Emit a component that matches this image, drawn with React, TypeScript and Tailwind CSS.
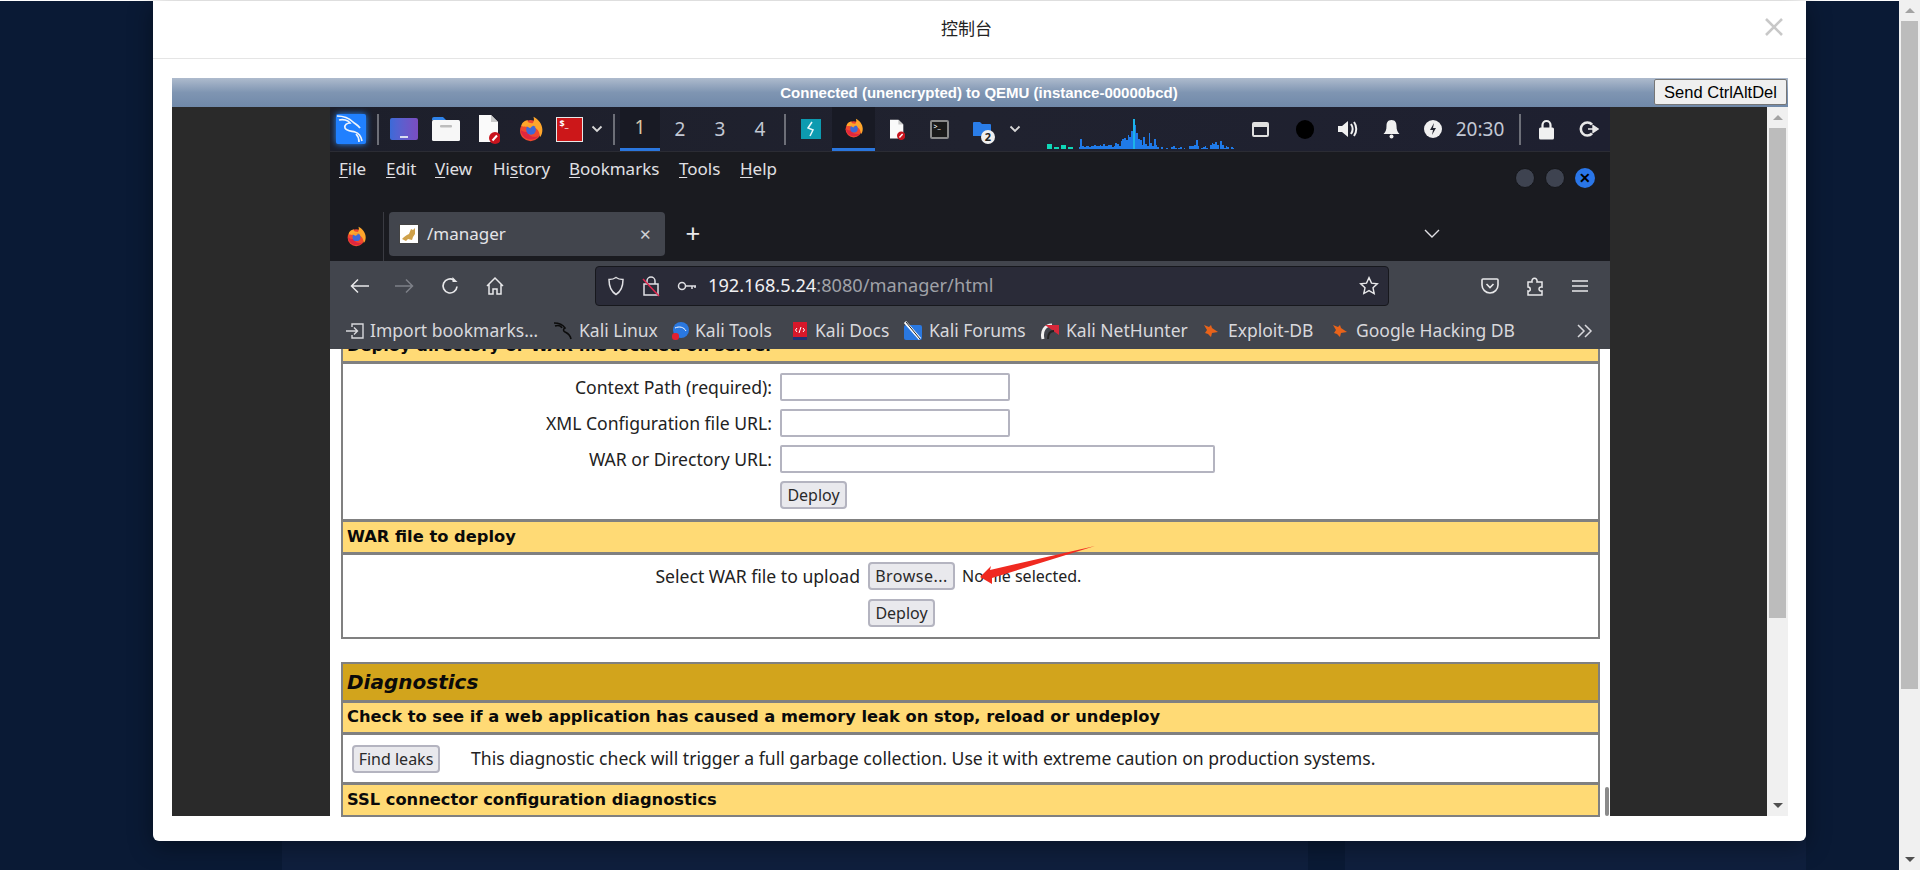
import { ReactNode } from "react";

const graph = [
  5, 5, 5, 0, 2, 2, 2, 0, 4, 4, 4, 0, 2, 2, 2, 0, 0, 0,
  2, 10, 3, 2, 3, 3, 2, 3, 3, 4, 3, 3, 4, 3, 5, 3, 3, 4, 4, 2, 3, 6, 5, 3, 8, 10, 11, 9, 14, 12, 18,
  30, 24, 16, 10, 9, 4, 12, 5, 3, 16, 6, 3, 10, 4, 2, 0, 2, 0, 0, 1, 0, 0, 2, 3, 1, 0, 1, 2, 0, 1, 0, 0,
  3, 3, 3, 4, 9, 3, 0, 1, 2, 3, 1, 0, 4, 6, 5, 7, 4, 0, 8, 4, 1, 3, 2, 0, 2, 1,
];

function Firefox({ size = 26 }: { size?: number }) {
  return (
    <svg width={size} height={size} viewBox="0 0 32 32">
      <circle cx="15.5" cy="18" r="13" fill="#f0492f" />
      <path d="M4 12C6 6 10 6 12 5c-1 3 2 4 6 4 2-2 2-5 1-8 6 3 11 9 11 16 0 4-1 7-3 9 0-6-3-12-9-12-6-1-12 0-14-2z" fill="#ffa62b" />
      <path d="M3 17c1 7 6 12 13 12 4 0 7-1 9-4-5 2-12 0-13-5-4 0-7-1-9-3z" fill="#e0263f" />
      <circle cx="16" cy="17" r="6" fill="#3f68d8" />
      <path d="M10 12c3-2 7-2 10 0-3 0-4 2-5 3-2-1-4-2-5-3z" fill="#ff9f2a" />
    </svg>
  );
}

function DocIcon({ w = 22, h = 30 }: { w?: number; h?: number }) {
  return (
    <svg width={w} height={h} viewBox="0 0 22 30">
      <path d="M1 1h12l7 7v20H1z" fill="#fafafa" />
      <path d="M13 1l7 7h-7z" fill="#c9c9c9" />
      <circle cx="17" cy="24" r="6" fill="#c8141e" />
      <path d="M14.5 26.5l4.5-5" stroke="#fff" strokeWidth="2" />
    </svg>
  );
}

function Folder() {
  return (
    <svg width="30" height="26" viewBox="0 0 30 26">
      <path d="M1 3a2 2 0 0 1 2-2h9l3 3h-14z" fill="#2f83ea" />
      <rect x="1" y="4" width="28" height="21" rx="1.5" fill="#f7f7f7" />
      <rect x="9" y="9" width="12" height="2.5" rx="1" fill="#bdbdbd" />
    </svg>
  );
}

function Chevron({ color = "#d8d8d8" }: { color?: string }) {
  return (
    <svg width="12" height="8" viewBox="0 0 12 8" fill="none" stroke={color} strokeWidth="1.8">
      <path d="M1.5 1.5 6 6l4.5-4.5" />
    </svg>
  );
}

function Slot({ className, children }: { className: string; children?: ReactNode }) {
  return <div className={`flex h-full items-center justify-center ${className}`}>{children}</div>;
}

function Sep() {
  return <div className="h-[31px] w-[2px] bg-[#6d6f78]" />;
}

function TaskBar() {
  return (
    <div className="flex h-[45px] border-b border-[#2b2c34] bg-gradient-to-r from-[#1d1f2b] via-[#20222f] to-[#1e2030] font-['Noto_Sans'] text-[#c3c8d4]">
      <Slot className="w-[42px]">
        <div className="flex h-[30px] w-[30px] items-center justify-center rounded-[2px] bg-[#2080ff] shadow-[0_0_6px_#2b8cff]">
          <svg width="30" height="30" viewBox="0 0 30 30" fill="none" stroke="#eef4fc" strokeWidth="1.7">
            <path d="M1 2c6 0 12 2 16 6 2 2 5 3 7 6M3 6c4-1 9 0 11 3-3 0-6 2-5 5 1 3 6 3 10 4 4 1 6 4 7 9" />
            <path d="M20 20c2 2 3 5 3 8" />
          </svg>
        </div>
      </Slot>
      <Slot className="w-[12px]"><Sep /></Slot>
      <Slot className="w-[40px]">
        <div className="flex h-[22px] w-[28px] items-end justify-center rounded-[2px] bg-gradient-to-r from-[#3a6ad8] to-[#7a4cc0] pb-[2px]">
          <div className="h-[2px] w-[8px] bg-[#d8dcf0]" />
        </div>
      </Slot>
      <Slot className="w-[44px]"><Folder /></Slot>
      <Slot className="w-[42px]"><DocIcon /></Slot>
      <Slot className="w-[42px]"><Firefox /></Slot>
      <Slot className="w-[34px]">
        <div className="h-[25px] w-[27px] border border-[#e8e8e8] bg-[#cc1719] pl-[3px] text-[9px] font-bold leading-[12px] text-white">$_</div>
      </Slot>
      <Slot className="w-[22px]"><Chevron /></Slot>
      <Slot className="w-[12px]"><Sep /></Slot>
      <Slot className="w-[40px] border-b-[3px] border-[#2a76dd] bg-[#181a24] text-[19px] text-[#d8c8a8]">1</Slot>
      <Slot className="w-[40px] text-[19px]">2</Slot>
      <Slot className="w-[40px] text-[19px]">3</Slot>
      <Slot className="w-[40px] text-[19px]">4</Slot>
      <Slot className="w-[10px]"><Sep /></Slot>
      <Slot className="w-[42px]">
        <div className="flex h-[20px] w-[20px] items-center justify-center bg-[#0d9bb0]">
          <svg width="10" height="16" viewBox="0 0 10 16" fill="none" stroke="#e8f8fa" strokeWidth="1.5">
            <path d="M6 1 2 7l5 2-3 6" />
          </svg>
        </div>
      </Slot>
      <Slot className="w-[43px] border-b-[3px] border-[#2a76dd] bg-[#181a24]"><Firefox size={20} /></Slot>
      <Slot className="w-[43px]"><DocIcon w={16} h={21} /></Slot>
      <Slot className="w-[42px]">
        <div className="h-[19px] w-[19px] rounded-[2px] border-2 border-[#8a8a8a] bg-[#1a1a1a] pl-[2px] text-[7px] leading-[9px] text-white">{">_"}</div>
      </Slot>
      <Slot className="relative w-[43px]">
        <svg width="20" height="16" viewBox="0 0 20 16">
          <path d="M1 2a1 1 0 0 1 1-1h6l2 2h8a1 1 0 0 1 1 1v11H1z" fill="#2a7de8" />
        </svg>
        <div className="absolute left-[21px] top-[23px] flex h-[14px] w-[14px] items-center justify-center rounded-full bg-[#efefef] text-[11px] font-bold text-[#222]">2</div>
      </Slot>
      <Slot className="w-[24px]"><Chevron /></Slot>
      <div className="w-[20px]" />
      <div className="flex h-[42px] w-[191px] items-end">
        {graph.map((h, i) => (
          <div
            key={i}
            className="w-[1.76px]"
            style={{ height: h, background: i < 18 ? "#0fd8b8" : i === 49 ? "#1cb4e8" : "#1f7ae8" }}
          />
        ))}
      </div>
      <Slot className="w-[44px]">
        <div className="h-[15px] w-[17px] rounded-[2px] border-2 border-[#e0e0e0] border-t-[5px]" />
      </Slot>
      <Slot className="w-[46px]">
        <div className="h-[19px] w-[18px] rounded-full bg-black" />
      </Slot>
      <Slot className="w-[40px]">
        <svg width="22" height="20" viewBox="0 0 22 20" fill="none">
          <path d="M1 7h4l6-5v16l-6-5H1z" fill="#f0f0f0" />
          <path d="M14 5c2 3 2 7 0 10M17 3c3 4 3 10 0 14" stroke="#f0f0f0" strokeWidth="2" />
        </svg>
      </Slot>
      <Slot className="w-[46px]">
        <svg width="17" height="20" viewBox="0 0 17 20">
          <path d="M8.5 1c4 0 5 3 5 6 0 4 1 6 3 8H.5c2-2 3-4 3-8 0-3 1-6 5-6z" fill="#f0f0f0" />
          <circle cx="8.5" cy="17.5" r="2" fill="#f0f0f0" />
        </svg>
      </Slot>
      <Slot className="w-[38px]">
        <svg width="18" height="18" viewBox="0 0 18 18">
          <circle cx="9" cy="9" r="9" fill="#f0f0f0" />
          <path d="M10 3 6 10h3l-1 5 4-7H9z" fill="#22242f" />
        </svg>
      </Slot>
      <Slot className="w-[56px] text-[19px]">20:30</Slot>
      <Slot className="w-[24px]"><Sep /></Slot>
      <Slot className="w-[28px]">
        <svg width="17" height="21" viewBox="0 0 17 21">
          <path d="M4.500 9V6a4 4 0 0 1 8 0v3" fill="none" stroke="#f0f0f0" strokeWidth="2.2" />
          <rect x="1" y="8.500" width="15" height="12" rx="1.500" fill="#f0f0f0" />
        </svg>
      </Slot>
      <Slot className="ml-[10px] w-[38px]">
        <svg width="20" height="18" viewBox="0 0 20 18" fill="none">
          <path d="M13 4.500A6.500 6.500 0 1 0 13 13.500" stroke="#e8e8e8" strokeWidth="2.6" />
          <path d="M9 9h6M14 5.500 19 9l-5 3.500z" stroke="#e8e8e8" fill="#e8e8e8" strokeWidth="1.4" />
        </svg>
      </Slot>
    </div>
  );
}

function MenuItem({ className, pre, ul, post }: { className: string; pre?: string; ul: string; post: string }) {
  return (
    <div className={className}>
      {pre}
      <span className="underline underline-offset-2">{ul}</span>
      {post}
    </div>
  );
}

function MenuBar() {
  return (
    <div className="flex h-[60px] bg-[#1a1b20] pl-[9px] pt-[5px] font-['Noto_Sans'] text-[17px] leading-[24px] text-[#e0e0e4]">
      <MenuItem className="w-[47px]" ul="F" post="ile" />
      <MenuItem className="w-[49px]" ul="E" post="dit" />
      <MenuItem className="w-[58px]" ul="V" post="iew" />
      <MenuItem className="w-[76px]" pre="Hi" ul="s" post="tory" />
      <MenuItem className="w-[110px]" ul="B" post="ookmarks" />
      <MenuItem className="w-[61px]" ul="T" post="ools" />
      <MenuItem className="w-[60px]" ul="H" post="elp" />
      <div className="ml-auto mr-[15px] mt-[11px] flex h-[20px] gap-[10px]">
        <div className="h-[20px] w-[20px] rounded-full border border-[#15161a] bg-[#3e4350]" />
        <div className="h-[20px] w-[20px] rounded-full border border-[#15161a] bg-[#3e4350]" />
        <div className="flex h-[20px] w-[20px] items-center justify-center rounded-full bg-[#2a76e8] text-[14px] font-bold leading-none text-black">✕</div>
      </div>
    </div>
  );
}

function TabBar() {
  return (
    <div className="flex h-[49px] bg-[#1a1b20] font-['Noto_Sans']">
      <Slot className="h-[45px] w-[53px]"><Firefox size={21} /></Slot>
      <div className="h-[49px] w-[1px] bg-[#3a3b42]" />
      <div className="ml-[5px] flex h-[44px] w-[276px] items-center rounded-[4px] bg-[#42454d] pl-[10px] text-[17px] text-[#e4e4e8]">
        <svg width="20" height="20" viewBox="0 0 20 20">
          <rect x="0.5" y="0.5" width="19" height="19" fill="#fff" stroke="#444" />
          <path d="M3 15c2-2 4-4 7-5l2-5 2 1 2-2 0 6-2 3-1 3-4-1-2 2z" fill="#cfa14a" />
        </svg>
        <span className="ml-[8px] flex-1">/manager</span>
        <span className="mr-[13px] text-[15px] text-[#d0d0d4]">✕</span>
      </div>
      <div className="ml-[18px] mt-[6px] h-[32px] w-[20px] text-center text-[26px] leading-[30px] text-[#e8e8ea]">+</div>
      <div className="ml-[721px] mt-[17px] h-[20px]">
        <svg width="16" height="10" viewBox="0 0 16 10" fill="none" stroke="#e0e0e4" strokeWidth="1.4">
          <path d="M1 1l7 7 7-7" />
        </svg>
      </div>
    </div>
  );
}

function Toolbar() {
  return (
    <div className="flex h-[50px] items-center bg-[#42454d] font-['Noto_Sans'] text-[#e8e8ea]">
      <Slot className="w-[60px]">
        <svg width="20" height="16" viewBox="0 0 20 16" fill="none" stroke="#e8e8ea" strokeWidth="1.5"><path d="M19 8H2M8 1.500 1.500 8 8 14.500" /></svg>
      </Slot>
      <Slot className="w-[28px]">
        <svg width="20" height="16" viewBox="0 0 20 16" fill="none" stroke="#7d8088" strokeWidth="1.5"><path d="M1 8h17M12 1.500 18.500 8 12 14.500" /></svg>
      </Slot>
      <Slot className="w-[64px]">
        <svg width="20" height="20" viewBox="0 0 20 20" fill="none" stroke="#e8e8ea" strokeWidth="1.7"><path d="M17 10.500A7 7 0 1 1 14 4.200" /><path d="M12.500 1v5h5z" fill="#e8e8ea" stroke="none" /></svg>
      </Slot>
      <Slot className="w-[26px]">
        <svg width="20" height="20" viewBox="0 0 20 20" fill="none" stroke="#e8e8ea" strokeWidth="1.5"><path d="M2 10l8-8 8 8M4 8v10h4v-5h4v5h4V8" /></svg>
      </Slot>
      <div className="ml-[87px] flex h-[40px] w-[794px] items-center rounded-[4px] border border-[#17181d] bg-[#2a2b38] pl-[11px]">
        <svg width="18" height="20" viewBox="0 0 18 20" fill="none" stroke="#e0e0e4" strokeWidth="1.5"><path d="M9 1.500c2 1.500 5 2 7 2 0 7-2 12-7 15-5-3-7-8-7-15 2 0 5-.5 7-2z" /></svg>
        <svg className="ml-[17px]" width="18" height="22" viewBox="0 0 18 22" fill="none" strokeWidth="1.5">
          <path d="M5 9V6a4 4 0 0 1 8 0v3M2 9h14v11H2z" stroke="#e0e0e4" />
          <path d="M1 4l16 17" stroke="#e22850" />
        </svg>
        <svg className="ml-[17px]" width="20" height="12" viewBox="0 0 20 12" fill="none" stroke="#e0e0e4" strokeWidth="1.5"><circle cx="5" cy="6" r="3.500" /><path d="M9 6h10M15 6v3M18 6v2" /></svg>
        <div className="ml-[11px] flex-1 text-[18.2px] text-[#f0f0f2]">
          192.168.5.24<span className="text-[#a0a2a8]">:8080/manager/html</span>
        </div>
        <svg className="mr-[9px]" width="20" height="20" viewBox="0 0 24 24" fill="none" stroke="#e8e8ea" strokeWidth="1.7"><path d="m12 2 3 6.500 7 .8-5.200 4.800 1.400 7L12 17.600 5.800 21l1.400-7L2 9.300l7-.8z" /></svg>
      </div>
      <Slot className="ml-[81px] w-[40px]">
        <svg width="18" height="18" viewBox="0 0 18 18" fill="none" stroke="#e8e8ea" strokeWidth="1.6"><path d="M2 2h14a1 1 0 0 1 1 1v5a8 8 0 0 1-16 0V3a1 1 0 0 1 1-1z" /><path d="M5.500 7 9 10.500 12.500 7" /></svg>
      </Slot>
      <Slot className="ml-[5px] w-[40px]">
        <svg width="18" height="20" viewBox="0 0 18 20" fill="none" stroke="#e8e8ea" strokeWidth="1.5"><path d="M2 6h4c-1-5 6-5 5 0h5v5c-4-1-4 5 0 4v4H2v-4c3 1 3-4 0-4z" /></svg>
      </Slot>
      <Slot className="ml-[2px] w-[46px]">
        <svg width="16" height="14" viewBox="0 0 16 14" fill="none" stroke="#e8e8ea" strokeWidth="1.6"><path d="M0 2h16M0 7h16M0 12h16" /></svg>
      </Slot>
    </div>
  );
}

function Flame() {
  return (
    <svg width="16" height="14" viewBox="0 0 16 14">
      <path d="M1 1l5 2 2-2 1 3 6 4-6 1-1 4-3-3-3-1 2-3z" fill="#e8631a" />
    </svg>
  );
}

function BookmarksBar() {
  return (
    <div className="relative z-10 flex h-[38px] items-center whitespace-nowrap bg-[#42454d] pl-[16px] pt-[1px] font-['Noto_Sans'] text-[17.5px] text-[#d8d8dc]">
      <svg width="18" height="16" viewBox="0 0 18 16" fill="none" stroke="#d8d8dc" strokeWidth="1.4"><path d="M6 4V1h11v14H6v-3M0 8h11M8 4.500 11.500 8 8 11.500" /></svg>
      <div className="ml-[6px] w-[183px]">Import bookmarks…</div>
      <svg width="20" height="20" viewBox="0 0 20 20" fill="none" stroke="#0c0c0c" strokeWidth="1.6"><path d="M1 2c5 0 9 2 11 5-2 1-2 3 0 4s5 2 6 7M2 5c3-1 6 0 7 2" /></svg>
      <div className="ml-[6px] w-[92px]">Kali Linux</div>
      <svg width="18" height="20" viewBox="0 0 18 20"><circle cx="10" cy="9" r="8" fill="#2a78e0" /><path d="M4 7c4-2 9-1 11 3" stroke="#fff" fill="none" /><rect x="1" y="12" width="7" height="7" rx="3" fill="#e22030" /></svg>
      <div className="ml-[6px] w-[97px]">Kali Tools</div>
      <svg width="16" height="20" viewBox="0 0 16 20"><rect x="1" y="1" width="14" height="18" fill="#d8182a" /><path d="M1 16h14v3H1z" fill="#203070" /><path d="M5 7 3.500 9 5 11M11 7l1.500 2L11 11M9 6 7 12" stroke="#fff" fill="none" /></svg>
      <div className="ml-[7px] w-[88px]">Kali Docs</div>
      <svg width="20" height="20" viewBox="0 0 20 20"><rect x="1" y="4" width="18" height="15" rx="2" fill="#2a78e0" /><path d="M2 1l15 17" stroke="#fff" strokeWidth="3" /><path d="M3 1l14 17" stroke="#222" /></svg>
      <div className="ml-[6px] w-[111px]">Kali Forums</div>
      <svg width="20" height="20" viewBox="0 0 20 20" fill="none"><path d="M3 18c-2-8 2-14 9-14" stroke="#f0f0f0" strokeWidth="3" /><path d="M5 4h14v10z" fill="#d8283a" /><path d="M8 18c0-5 2-8 6-8" stroke="#222" strokeWidth="2" /></svg>
      <div className="ml-[6px] w-[137px]">Kali NetHunter</div>
      <Flame />
      <div className="ml-[9px] w-[104px]">Exploit-DB</div>
      <Flame />
      <div className="ml-[8px] w-[220px]">Google Hacking DB</div>
      <svg width="18" height="14" viewBox="0 0 18 14" fill="none" stroke="#d8d8dc" strokeWidth="1.5"><path d="M2 1l6 6-6 6M9 1l6 6-6 6" /></svg>
    </div>
  );
}

function Btn({ className, children }: { className: string; children: ReactNode }) {
  return (
    <div className={`flex h-[28px] items-center justify-center rounded-[4px] border-2 border-[#b4b4c0] bg-[#e9e9ed] text-[16px] text-[#2a2a2a] ${className}`}>
      {children}
    </div>
  );
}

function Input({ className }: { className: string }) {
  return <div className={`h-[28px] rounded-[2px] border-2 border-[#b4b4c0] bg-white ${className}`} />;
}

function YellowRow({ className, children }: { className: string; children: ReactNode }) {
  return (
    <div className={`flex items-center border-b-[3px] border-[#808080] bg-[#ffda75] pl-[4px] font-['DejaVu_Sans'] text-[16.3px] font-bold text-[#0a0a0a] ${className}`}>
      {children}
    </div>
  );
}

function FormRow({ label, children }: { label: string; children: ReactNode }) {
  return (
    <div className="flex items-center">
      <div className="w-[435px] pr-[6px] text-right">{label}</div>
      <div className="ml-[2px]">{children}</div>
    </div>
  );
}

function ManagerPage() {
  return (
    <div className="h-[468px] overflow-hidden bg-white pl-[11px] font-['Noto_Sans'] text-[17.6px] text-[#222]">
      <div className="relative -mt-[18px] w-[1259px]">
        <div className="border-2 border-[#808080] border-t-0">
          <YellowRow className="h-[33px]">Deploy directory or WAR file located on server</YellowRow>
          <div className="flex h-[158px] flex-col gap-[8px] border-b-[3px] border-[#808080] pt-[9px]">
            <FormRow label="Context Path (required):"><Input className="w-[230px]" /></FormRow>
            <FormRow label="XML Configuration file URL:"><Input className="w-[230px]" /></FormRow>
            <FormRow label="WAR or Directory URL:"><Input className="w-[435px]" /></FormRow>
            <FormRow label=""><Btn className="w-[67px]">Deploy</Btn></FormRow>
          </div>
          <YellowRow className="h-[33px]">WAR file to deploy</YellowRow>
          <div className="flex h-[82px] flex-col gap-[9px] pt-[7px]">
            <div className="flex items-center">
              <div className="w-[523px] pr-[6px] text-right">Select WAR file to upload</div>
              <Btn className="ml-[2px] w-[87px] tracking-[0.5px]">Browse...</Btn>
              <div className="ml-[7px] text-[16px]">No file selected.</div>
            </div>
            <div className="ml-[525px]"><Btn className="w-[67px]">Deploy</Btn></div>
          </div>
        </div>
        <div className="h-[23px]" />
        <div className="border-2 border-b-0 border-[#808080]">
          <div className="flex h-[39px] items-center border-b-[3px] border-[#808080] bg-[#d2a41c] pl-[4px] font-['DejaVu_Sans'] text-[20px] font-bold italic text-[#0a0a0a]">Diagnostics</div>
          <YellowRow className="h-[32px]">Check to see if a web application has caused a memory leak on stop, reload or undeploy</YellowRow>
          <div className="flex h-[50px] items-center border-b-[3px] border-[#808080] pl-[9px]">
            <Btn className="w-[88px]">Find leaks</Btn>
            <div className="ml-[31px]">This diagnostic check will trigger a full garbage collection. Use it with extreme caution on production systems.</div>
          </div>
          <YellowRow className="h-[33px]">SSL connector configuration diagnostics</YellowRow>
        </div>
      </div>
    </div>
  );
}

export default function App() {
  return (
    <div className="relative flex h-[870px] w-[1920px] overflow-hidden font-['Liberation_Sans']">
      <div className="flex flex-1 flex-col justify-end border-t border-white bg-[#0a1a35]">
        <div className="flex h-[60px] pl-[282px]">
          <div className="w-[1026px] rounded-tl-[8px] bg-[#0f1f3d]" />
          <div className="ml-[37px] w-[461px] rounded-tl-[8px] bg-[#0f1f3d]" />
        </div>
      </div>
      <div className="flex w-[21px] flex-col items-center bg-[#f0f0f0]">
        <div className="flex h-[21px] items-center justify-center"><div className="h-0 w-0 border-x-[5px] border-b-[5px] border-x-transparent border-b-[#a3a3a3]" /></div>
        <div className="h-[668px] w-[17px] bg-[#bcbcbc]" />
        <div className="mt-auto flex h-[21px] items-center justify-center"><div className="h-0 w-0 border-x-[5px] border-t-[5px] border-x-transparent border-t-[#505050]" /></div>
      </div>

      {/* dialog */}
      <div className="absolute left-[153px] top-[1px] h-[840px] w-[1653px] rounded-b-[6px] bg-white shadow-[0_5px_25px_rgba(0,0,0,0.4)]">
        <div className="relative flex h-[58px] items-center justify-center border-b border-[#e5e5e5] pb-[4px] pr-[26px] font-['Noto_Sans_CJK_SC','Noto_Sans',sans-serif] text-[17px] text-[#222]">
          控制台
          <svg className="absolute right-[23px] top-[17px]" width="18" height="18" viewBox="0 0 18 18" stroke="#c8c8c8" strokeWidth="2.6"><path d="M1 1l16 16M17 1 1 17" /></svg>
        </div>
        <div className="mx-[19px] mt-[19px] w-[1616px]">
          <div className="flex h-[29px] bg-gradient-to-b from-[#aebbcd] via-[#7f95b2] to-[#7089a9]">
            <div className="flex-1 pl-[132px] text-center text-[15px] font-bold leading-[29px] text-white">Connected (unencrypted) to QEMU (instance-00000bcd)</div>
            <div className="mr-[1px] mt-[1px] flex h-[26px] w-[133px] items-center justify-center rounded-[2px] border border-[#767676] bg-[#efefef] text-[16.5px] text-black">Send CtrlAltDel</div>
          </div>
          <div className="flex h-[709px]">
            <div className="flex flex-1 justify-center bg-[#2a2a2a]">
              <div className="relative ml-[158px] flex h-[709px] w-[1280px] flex-col">
                <TaskBar />
                <MenuBar />
                <TabBar />
                <Toolbar />
                <BookmarksBar />
                <div className="flex h-[467px] bg-white">
                  <div className="w-[1275px]"><ManagerPage /></div>
                  <div className="flex w-[5px] flex-col justify-end bg-white">
                    <div className="h-[29px] w-[4px] rounded-[2px] bg-[#8a8a8a]" />
                  </div>
                </div>
                {/* red arrow annotation */}
                <svg className="absolute left-[638px] top-[430px]" width="130" height="50" viewBox="0 0 130 50">
                  <path d="M12 40 23 29 22 33 127 9 24 41 24 47z" fill="#f02a20" />
                </svg>
              </div>
              <div className="w-[157px]" />
            </div>
            <div className="flex w-[21px] flex-col items-center bg-[#f0f0f0]">
              <div className="flex h-[21px] items-center justify-center"><div className="h-0 w-0 border-x-[5px] border-b-[5px] border-x-transparent border-b-[#a3a3a3]" /></div>
              <div className="h-[490px] w-[17px] bg-[#bcbcbc]" />
              <div className="mt-auto flex h-[21px] items-center justify-center"><div className="h-0 w-0 border-x-[5px] border-t-[5px] border-x-transparent border-t-[#505050]" /></div>
            </div>
          </div>
        </div>
      </div>
    </div>
  );
}
